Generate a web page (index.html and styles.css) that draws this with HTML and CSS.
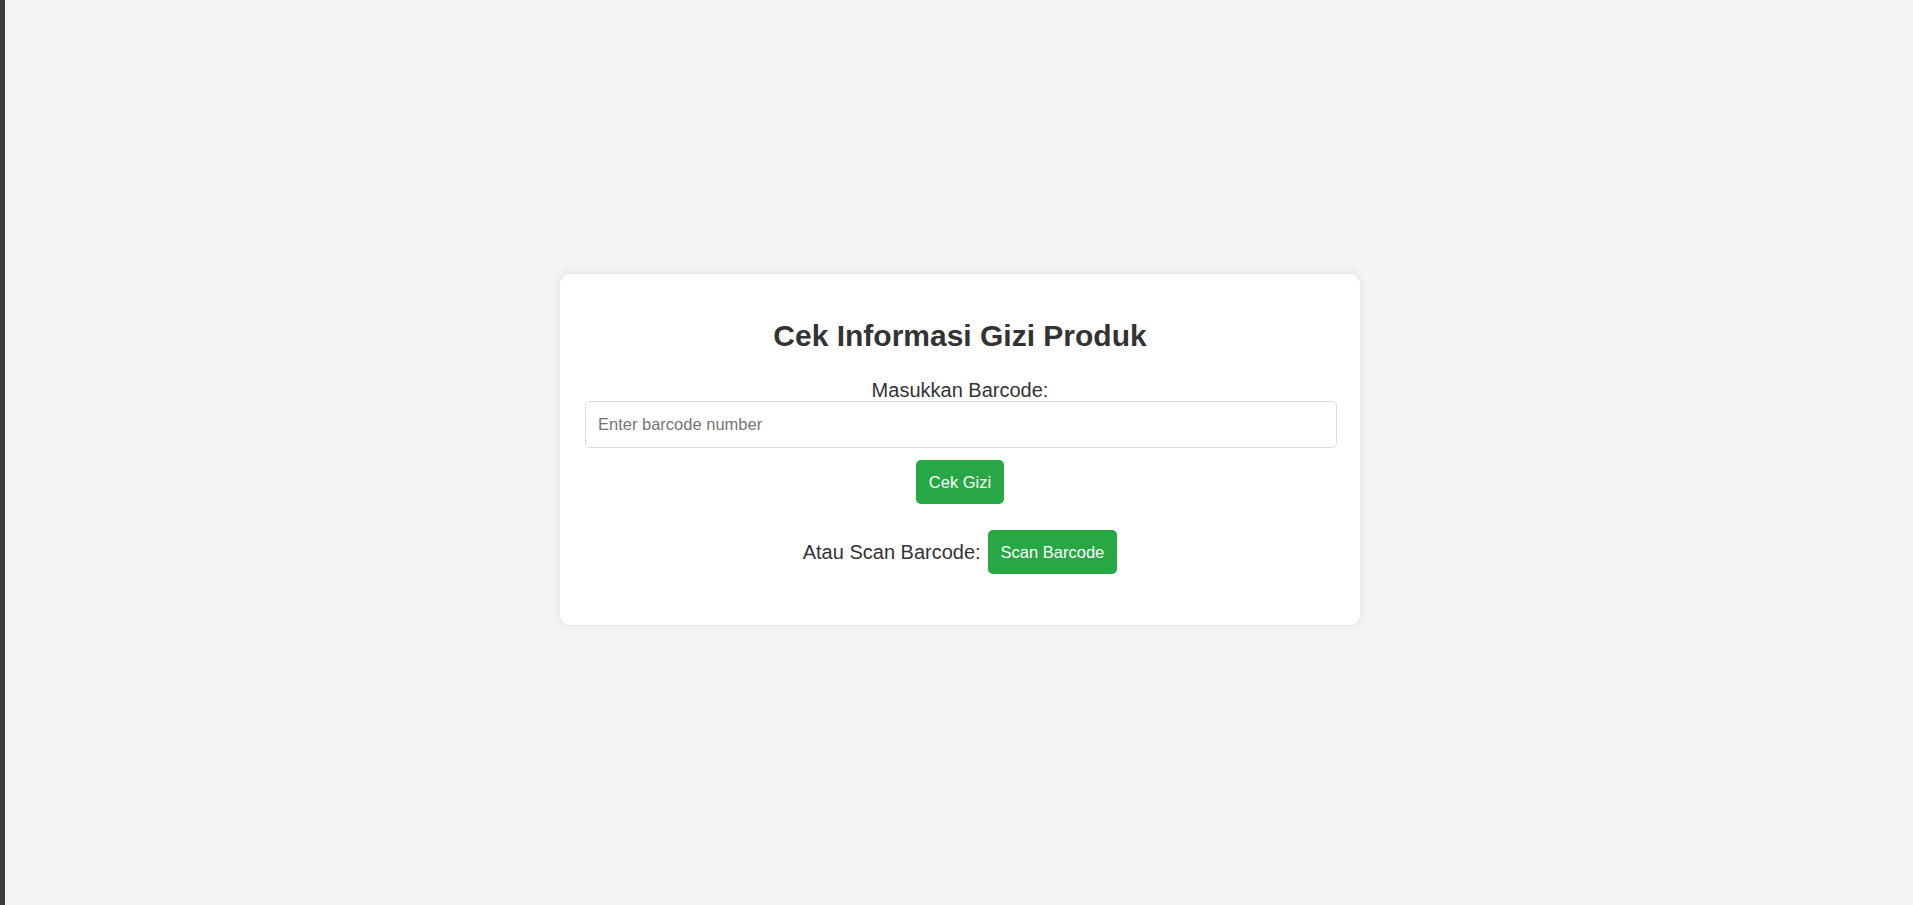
FILE: index.html
```html
<!DOCTYPE html>
<html lang="id">
<head>
<meta charset="utf-8">
<title>Cek Informasi Gizi Produk</title>
<link rel="stylesheet" href="styles.css">
</head>
<body>
<div class="edge"></div>
<main class="page">
  <div class="card">
    <h2 class="title">Cek Informasi Gizi Produk</h2>
    <label class="label" for="barcode">Masukkan Barcode:</label>
    <input class="input" id="barcode" type="text" placeholder="Enter barcode number">
    <button class="btn btn-check" type="button">Cek Gizi</button>
    <div class="scan-row">
      <span class="scan-label">Atau Scan Barcode:</span>
      <button class="btn" type="button">Scan Barcode</button>
    </div>
  </div>
</main>
</body>
</html>
```

FILE: styles.css
```css
html, body {
  margin: 0;
  padding: 0;
  height: 100%;
}
body {
  display: flex;
  background: #f4f4f4;
  font-family: "Liberation Sans", Arial, sans-serif;
  color: #333;
}
.edge {
  width: 5px;
  flex: none;
  background: #3b3b3b;
}
.page {
  flex: 1;
  display: flex;
  align-items: center;
  justify-content: center;
  padding: 0 0 6px 2px;
  box-sizing: border-box;
}
.card {
  width: 800px;
  box-sizing: border-box;
  background: #fff;
  border-radius: 10px;
  box-shadow: 0 0 10px rgba(0, 0, 0, 0.1);
  padding: 25px;
  display: flex;
  flex-direction: column;
  align-items: center;
  text-align: center;
}
.title {
  margin: 20px 0 26px;
  font-size: 30px;
  font-weight: bold;
  color: #333;
}
.label {
  display: block;
  font-size: 20px;
  line-height: 22px;
  color: #333;
}
.input {
  width: calc(100% + 2px);
  align-self: flex-start;
  box-sizing: border-box;
  height: 47px;
  padding: 0 12px;
  border: 1px solid #dcdcdc;
  border-radius: 5px;
  font-family: "Liberation Sans", Arial, sans-serif;
  font-size: 16.5px;
  color: #333;
  background: #fff;
  margin: 0 0 12px;
  outline: none;
}
.input::placeholder {
  color: #757575;
}
.btn {
  height: 44px;
  padding: 0 13px;
  border: none;
  border-radius: 5px;
  background: #28a745;
  color: #fff;
  font-family: "Liberation Sans", Arial, sans-serif;
  font-size: 16.5px;
  cursor: pointer;
}
.btn-check {
  margin-bottom: 26px;
}
.scan-row {
  display: flex;
  align-items: center;
  gap: 7px;
  margin-bottom: 26px;
}
.scan-label {
  font-size: 20px;
  color: #333;
}
```
